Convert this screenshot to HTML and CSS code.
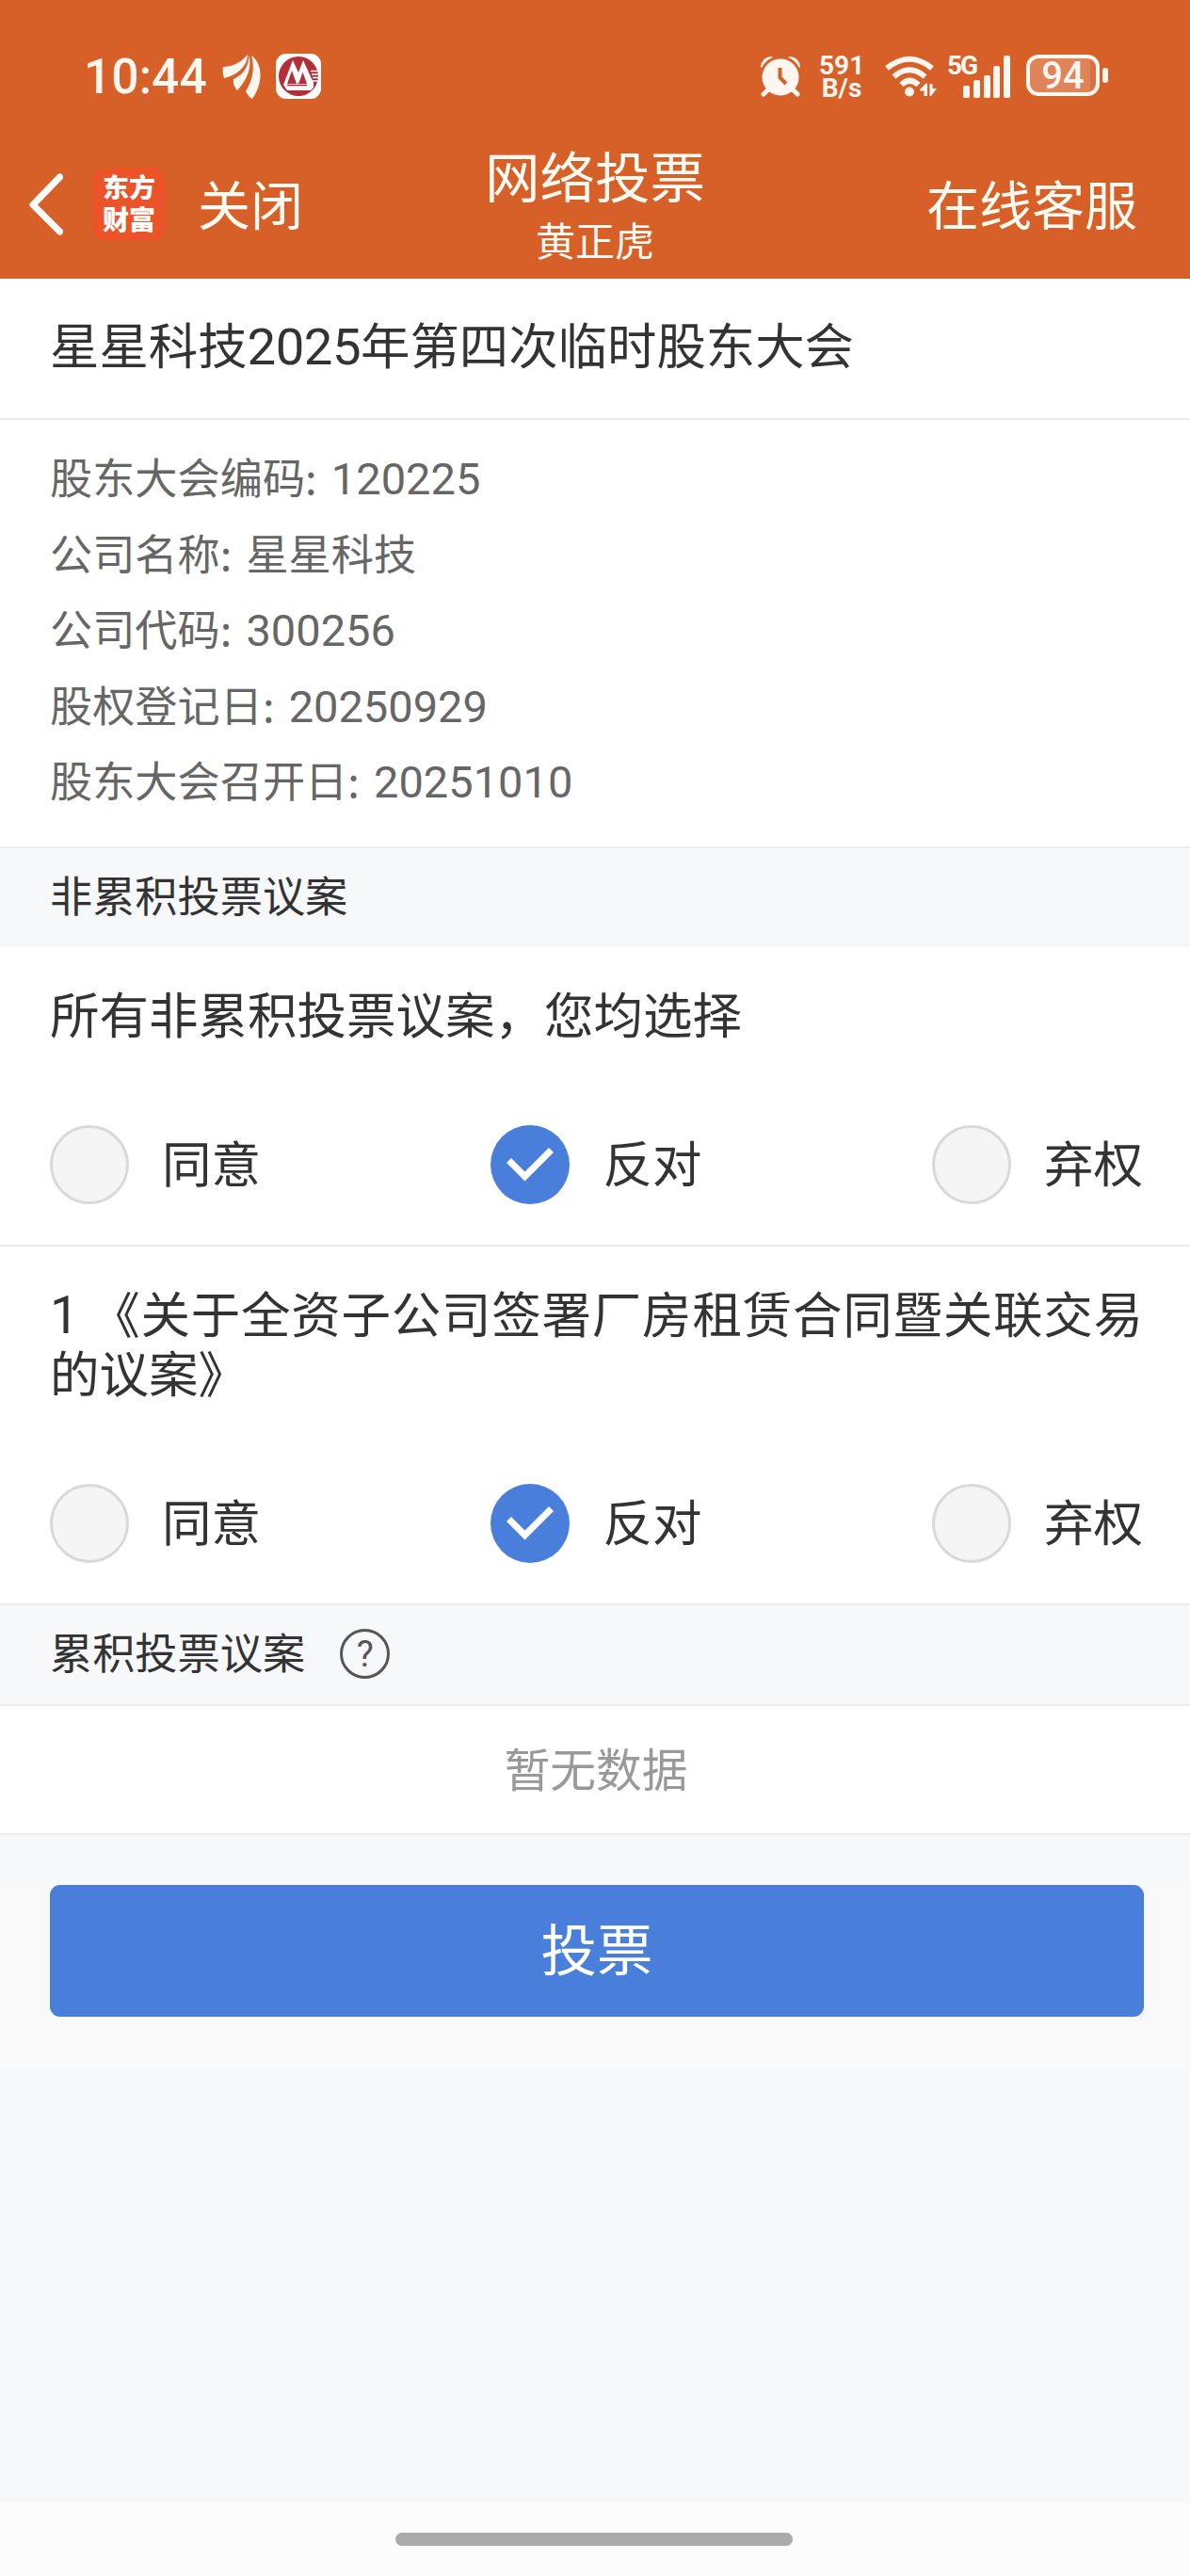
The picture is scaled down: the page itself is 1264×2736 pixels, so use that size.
FILE: index.html
```html
<!DOCTYPE html>
<html lang="zh-CN">
<head>
  <meta charset="UTF-8">
  <meta name="viewport" content="width=device-width, initial-scale=1.0">
  <title>网络投票</title>
  <link rel="stylesheet" href="styles.css">
</head>
<body>
  <header class="header">
    <div class="status-bar">
      <span class="time">10:44</span>
      <svg class="icon-wing" width="42" height="48" viewBox="0 0 42 48">
        <path d="M1 14C12 14 20 9 27 1C27 12 18 22 2 26Q0 20 1 14Z"/>
        <path d="M28.500 1C31.500 15 27 27 16 39Q11 34 12 27C23 22 28.500 13 28.500 1Z"/>
        <path d="M31 2C44 11 43 32 32 48Q27 45 25 40C32 29 35 16 31 2Z"/>
      </svg>
      <svg class="icon-bank" width="48" height="48" viewBox="0 0 48 48">
        <rect width="48" height="48" rx="11" fill="#fff"/>
        <circle cx="24" cy="24" r="21" fill="#b22f39"/>
        <path d="M8 33L18 7L24 20L29 7L40 31V36L37 39H12Z" fill="#fff"/>
        <path d="M12 32L17 18L22 32ZM23 32L28 18L33 32Z" fill="#b22f39"/>
        <path d="M18 14L24 28L29 14" fill="none" stroke="#fff" stroke-width="3"/>
        <path d="M37 18.500H45M38 22H45M39 25.500H45M39 29H45" stroke="#fff" stroke-width="1.300"/>
        <path d="M12 33.500H33" stroke="#b22f39" stroke-width="1.500"/>
      </svg>
      <div class="status-right">
        <svg class="icon-alarm" width="44" height="44" viewBox="0 0 44 44">
          <circle cx="22" cy="23" r="19.500"/>
          <path d="M1 12Q2 2 12 1L14 2Q6 5 2 13Z"/>
          <path d="M43 12Q42 2 32 1L30 2Q38 5 42 13Z"/>
          <path d="M9 36L4 41M35 36L40 41" stroke="#fff6f0" stroke-width="5" stroke-linecap="round"/>
          <path d="M21.500 13V23.500L28 30" fill="none" stroke="#d75f28" stroke-width="4"/>
        </svg>
        <div class="speed"><span>591</span><span>B/s</span></div>
        <svg class="icon-wifi" width="58" height="46" viewBox="0 0 58 46">
          <g fill="none" stroke="#fff6f0" stroke-width="6">
            <path d="M3 13.500Q27 -6 51 13.500"/>
            <path d="M10.500 22.500Q27 8 43.500 22.500"/>
            <path d="M18.500 31Q27 22.500 36.500 31"/>
          </g>
          <circle cx="27" cy="38.500" r="5"/>
          <path d="M38 36L44.500 29.500H46V43H42.500V37.500H38Z"/>
          <path d="M56 35L50 43H48.500V30H51.500V35Z"/>
        </svg>
        <div class="signal">
          <span class="signal-label">5G</span>
          <svg width="52" height="46" viewBox="0 0 52 46">
            <rect x="2" y="32" width="7" height="13" rx="2"/>
            <rect x="13" y="26" width="7" height="19" rx="2"/>
            <rect x="24" y="21" width="7" height="24" rx="2"/>
            <rect x="34" y="11" width="7" height="34" rx="2"/>
            <rect x="45" y="0" width="7" height="45" rx="2"/>
          </svg>
        </div>
        <div class="battery"><span>94</span></div>
        <div class="battery-tip"></div>
      </div>
    </div>

    <nav class="nav">
      <div class="nav-left">
        <svg class="back" width="37" height="66" viewBox="0 0 37 66">
          <path d="M33.500 4L5 33.500L33.500 62"/>
        </svg>
        <div class="logo"><span>东方</span><span>财富</span></div>
        <span class="nav-text">关闭</span>
      </div>
      <div class="nav-title">
        <h1>网络投票</h1>
        <p>黄正虎</p>
      </div>
      <span class="nav-text nav-right">在线客服</span>
    </nav>
  </header>

  <h2 class="meeting-title">星星科技<span class="num">2025</span>年第四次临时股东大会</h2>

  <div class="info">
    <p>股东大会编码: <span class="num">120225</span></p>
    <p>公司名称: 星星科技</p>
    <p>公司代码: <span class="num">300256</span></p>
    <p>股权登记日: <span class="num">20250929</span></p>
    <p>股东大会召开日: <span class="num">20251010</span></p>
  </div>

  <div class="section">非累积投票议案</div>

  <div class="vote">
    <p class="vote-title">所有非累积投票议案，您均选择</p>
    <div class="options">
      <div class="option"><i class="radio"></i>同意</div>
      <div class="option">
        <i class="radio checked"><svg width="50" height="36" viewBox="0 0 50 36"><path d="M2.500 13.500L19.500 30.500L47.500 2.500"/></svg></i>反对
      </div>
      <div class="option"><i class="radio"></i>弃权</div>
    </div>
  </div>

  <div class="vote">
    <p class="vote-title"><span class="num">1</span> 《关于全资子公司签署厂房租赁合同暨关联交易的议案》</p>
    <div class="options">
      <div class="option"><i class="radio"></i>同意</div>
      <div class="option">
        <i class="radio checked"><svg width="50" height="36" viewBox="0 0 50 36"><path d="M2.500 13.500L19.500 30.500L47.500 2.500"/></svg></i>反对
      </div>
      <div class="option"><i class="radio"></i>弃权</div>
    </div>
  </div>

  <div class="section section-line">
    累积投票议案
    <span class="help">?</span>
  </div>
  <div class="empty">暂无数据</div>

  <div class="submit">
    <button type="button">投票</button>
  </div>

  <footer class="home-bar"><div class="handle"></div></footer>
</body>
</html>
```

FILE: styles.css
```css
* {
  box-sizing: border-box;
}
body {
  margin: 0;
  height: 2736px;
  display: flex;
  flex-direction: column;
  background: #f7f8fa;
  color: #333;
  font-family: "Noto Sans CJK SC", sans-serif;
}
h1, h2, p {
  margin: 0;
  font-weight: normal;
}
.num {
  font-family: Roboto, sans-serif;
  font-size: 1.04em;
  line-height: 0;
}

/* header */
.header {
  height: 296px;
  background: #d75f28;
  color: #fffaf2;
}
.status-bar {
  height: 140px;
  padding: 56px 87px 0 89px;
  display: flex;
  align-items: flex-start;
  color: #fff6f0;
  fill: #fff6f0;
  font-family: Roboto, sans-serif;
}
.time {
  width: 132px;
  font-size: 51.5px;
  font-weight: 500;
  line-height: 52px;
}
.icon-wing {
  margin: 1px 0 0 15px;
}
.icon-bank {
  margin: 1px 0 0 15px;
}
.status-right {
  margin-left: auto;
  display: flex;
  align-items: flex-start;
}
.icon-alarm {
  margin-top: 3px;
}
.speed {
  display: flex;
  flex-direction: column;
  width: 48px;
  margin-left: 19px;
  font-size: 28px;
  font-weight: 700;
  line-height: 24px;
  text-align: center;
  padding-top: 2px;
}
.icon-wifi {
  margin: 3px 0 0 21px;
}
.signal {
  display: flex;
  width: 67px;
  margin: 3px 0 0 9px;
}
.signal-label {
  width: 15px;
  font-size: 28px;
  font-weight: 700;
  line-height: 22px;
  letter-spacing: -2px;
}
.signal svg {
  flex: none;
}
.battery {
  width: 78px;
  height: 44px;
  margin: 2px 0 0 17px;
  border: 4px solid #fff6f0;
  border-radius: 13px;
  background: linear-gradient(90deg, #e08358 64px, #d87041 64px);
  text-align: center;
  font-size: 40px;
  font-weight: 500;
  line-height: 38px;
}
.battery-tip {
  width: 6px;
  height: 16px;
  margin: 16px 0 0 3px;
  border-radius: 3px;
  background: #fff6f0;
}
.nav {
  height: 156px;
  padding: 0 30px;
  display: grid;
  grid-template-columns: 1fr 300px 1fr;
}
.nav-left {
  display: flex;
  align-items: flex-start;
}
.back {
  margin-top: 44px;
  fill: none;
  stroke: #fff;
  stroke-width: 7;
  stroke-linecap: round;
  stroke-linejoin: round;
}
.logo {
  display: flex;
  flex-direction: column;
  align-items: center;
  width: 78px;
  height: 78px;
  margin: 38px 34px 0 31px;
  padding-top: 3px;
  border-radius: 15px;
  background: #eb5328;
  color: #fff;
  font-size: 28px;
  font-weight: 900;
  line-height: 34px;
}
.nav-text {
  font-size: 56px;
  line-height: 149px;
}
.nav-title {
  padding-top: 4px;
  text-align: center;
}
.nav-title h1 {
  font-size: 58.5px;
  line-height: 82px;
}
.nav-title p {
  font-size: 42px;
  line-height: 56px;
}
.nav-right {
  padding-right: 26px;
  text-align: right;
}

/* meeting info */
.meeting-title {
  height: 150px;
  padding: 0 53px;
  border-bottom: 2px solid #ededed;
  background: #fff;
  font-size: 52.4px;
  line-height: 136px;
}
.meeting-title .num {
  letter-spacing: -0.5px;
}
.info {
  height: 453px;
  padding: 20px 53px 0;
  background: #fff;
  color: #666;
  font-size: 45.2px;
  line-height: 80.5px;
  word-spacing: 5px;
}
.section {
  height: 107px;
  padding: 0 0 8px 53px;
  border-top: 2px solid #ededed;
  display: flex;
  align-items: center;
  font-size: 45.2px;
}

/* vote */
.vote {
  padding: 38px 50px 43px 53px;
  background: #fff;
}
.vote + .vote {
  border-top: 2px solid #ededed;
}
.vote-title {
  font-size: 52.5px;
  line-height: 63px;
  text-align: justify;
}
.options {
  display: flex;
  justify-content: space-between;
  margin-top: 88px;
}
.option {
  display: flex;
  align-items: flex-start;
  font-size: 52.5px;
  line-height: 76px;
}
.radio {
  width: 84px;
  height: 84px;
  margin-right: 35px;
  border: 3px solid #d9d9d9;
  border-radius: 50%;
  background: #f5f5f5;
  display: flex;
  align-items: center;
  justify-content: center;
}
.radio.checked {
  border: none;
  background: #497fdb;
}
.radio svg {
  fill: none;
  stroke: #fff;
  stroke-width: 7;
}
.section-line {
  height: 109px;
  border-bottom: 2px solid #ededed;
}
.help {
  width: 53px;
  height: 53px;
  margin: 5px 0 0 37px;
  border: 3px solid #555;
  border-radius: 50%;
  color: #555;
  font-family: Roboto, sans-serif;
  font-size: 38px;
  line-height: 48px;
  text-align: center;
}
.empty {
  height: 137px;
  padding-left: 2px;
  border-bottom: 2px solid #ededed;
  background: #fff;
  color: #999;
  font-size: 48.7px;
  line-height: 130px;
  text-align: center;
}
.submit {
  margin-top: 52px;
  padding: 1px 49px 53px 53px;
  background: #f9f9f9;
}
.submit button {
  display: block;
  width: 100%;
  height: 140px;
  padding: 0 0 11px;
  border: none;
  border-radius: 11px;
  background: #497fdb;
  color: #fff;
  font-family: inherit;
  font-size: 59.5px;
}
.home-bar {
  height: 78px;
  margin-top: auto;
  padding: 32px 0 0 420px;
  background: #fcfcfc;
}
.handle {
  width: 422px;
  height: 14px;
  border-radius: 7px;
  background: #ababab;
}
```
